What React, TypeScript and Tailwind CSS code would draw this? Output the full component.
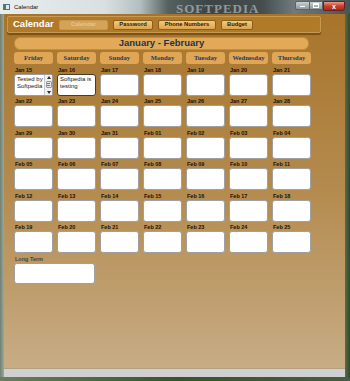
import React from "react";

const days = ["Friday", "Saturday", "Sunday", "Monday", "Tuesday", "Wednesday", "Thursday"];

const weeks: string[][] = [
  ["Jan 15", "Jan 16", "Jan 17", "Jan 18", "Jan 19", "Jan 20", "Jan 21"],
  ["Jan 22", "Jan 23", "Jan 24", "Jan 25", "Jan 26", "Jan 27", "Jan 28"],
  ["Jan 29", "Jan 30", "Jan 31", "Feb 01", "Feb 02", "Feb 03", "Feb 04"],
  ["Feb 05", "Feb 06", "Feb 07", "Feb 08", "Feb 09", "Feb 10", "Feb 11"],
  ["Feb 12", "Feb 13", "Feb 14", "Feb 15", "Feb 16", "Feb 17", "Feb 18"],
  ["Feb 19", "Feb 20", "Feb 21", "Feb 22", "Feb 23", "Feb 24", "Feb 25"],
];

const sans = { fontFamily: '"Liberation Sans", Arial, sans-serif' };
const serif = { fontFamily: '"Liberation Serif", "Times New Roman", serif' };

function Cell({ wi, di }: { wi: number; di: number }) {
  if (wi === 0 && di === 0) {
    return (
      <div className="relative h-[22px] rounded-[3px] border border-[#9c9c9c] bg-white flex">
        <div className="flex-1 pl-[2px] pt-[1px] text-[6px] leading-[7px] text-[#202020]" style={sans}>
          Tested by
          <br />
          Softpedia
        </div>
        <div className="w-[8px] h-full border-l border-[#c8c8c8] bg-[#f0f0f0] flex flex-col items-center justify-between py-[1px]">
          <div className="w-0 h-0 border-l-[2px] border-r-[2px] border-b-[3px] border-l-transparent border-r-transparent border-b-[#303030]" />
          <div className="w-[6px] h-[7px] rounded-[1px] border border-[#9a9a9a] bg-[#e4e4e4] flex flex-col items-center justify-center gap-[1px]">
            <div className="w-[3px] h-px bg-[#808080]" />
            <div className="w-[3px] h-px bg-[#808080]" />
          </div>
          <div className="w-0 h-0 border-l-[2px] border-r-[2px] border-t-[3px] border-l-transparent border-r-transparent border-t-[#303030]" />
        </div>
      </div>
    );
  }
  if (wi === 0 && di === 1) {
    return (
      <div className="h-[22px] rounded-[3px] border-[1.5px] border-[#4a3c28] bg-white pl-[2px] pt-[1px] text-[6px] leading-[7px] text-[#202020]" style={sans}>
        Softpedia is
        <br />
        testing
      </div>
    );
  }
  return <div className="h-[22px] rounded-[3px] border border-[#a0a0a0] bg-white" />;
}

export default function App() {
  return (
    <div className="w-[350px] h-[381px] relative overflow-hidden bg-[#55685a] flex flex-col" style={sans}>
      {/* title bar */}
      <div
        className="relative h-[14px] shrink-0 flex items-center"
        style={{
          background:
            "linear-gradient(to right, #e9eef0 0%, #d8e0e2 30%, #b4bec0 40%, #56605f 48%, #3c4446 60%, #454d4f 75%, #707a7c 84%, #4a5456 100%)",
        }}
      >
        <div className="ml-[3px] w-[7px] h-[6px] border border-[#607080] bg-[linear-gradient(to_right,#3a8a4a_50%,#dfe8f0_50%)]" />
        <span className="ml-[4px] text-[6px] text-[#101010]" style={sans}>
          Calendar
        </span>
        <span
          className="absolute left-[176px] top-[-1px] text-[13px] font-bold tracking-[1px] text-[#c8cccc] opacity-60"
          style={serif}
        >
          SOFTPEDIA
        </span>
        <div className="absolute right-[5px] top-[1px] flex h-[11px]">
          <div className="w-[15px] h-[9px] rounded-l-[2px] border border-[#5a6466] bg-[linear-gradient(#c8d0d2,#8e9a9c)] flex items-end justify-center pb-[2px]">
            <div className="w-[5px] h-[1.5px] bg-white" />
          </div>
          <div className="w-[13px] h-[9px] border border-l-0 border-[#5a6466] bg-[linear-gradient(#c8d0d2,#8e9a9c)] flex items-center justify-center">
            <div className="w-[6px] h-[5px] border border-white border-t-2" />
          </div>
          <div className="w-[22px] h-[10px] rounded-br-[3px] rounded-tr-[1px] border border-[#6a2018] bg-[linear-gradient(#e89a8a,#c8402e_50%,#b02818)] flex items-center justify-center text-[7px] font-bold leading-none text-white">
            x
          </div>
        </div>
      </div>

      {/* body */}
      <div className="flex flex-1 min-h-0">
        <div className="w-[4px] bg-[linear-gradient(to_right,#6f8070,#9aa8a2)]" />
        <div className="flex-1 flex flex-col bg-[linear-gradient(#a8742a,#b48c50_50%,#c8ae88)]">
          {/* toolbar */}
          <div className="relative mt-[2px] ml-[3px] w-[314px] h-[17px] rounded-[2px] border border-[#c79a52] bg-[#b07a28] shadow-[0_2px_1px_#7a5018] flex items-center">
            <span className="ml-[5px] w-[42px] text-[9.5px] font-bold text-white" style={sans}>
              Calendar
            </span>
            <div className="ml-[4px] w-[49px] h-[10px] rounded-[2px] border border-[#c89850] bg-[#d4a35a] flex items-center justify-center text-[5.8px] font-bold text-[#e6c68e]">
              Calendar
            </div>
            {[
              ["Password", "w-[40px]"],
              ["Phone Numbers", "w-[58px]"],
              ["Budget", "w-[32px]"],
            ].map(([t, w]) => (
              <div
                key={t}
                className={`ml-[5px] ${w} h-[10px] rounded-[2px] border border-[#8a5e1c] bg-[linear-gradient(#f4c878,#dca450)] flex items-center justify-center text-[5.8px] font-bold text-[#2a1a08]`}
              >
                {t}
              </div>
            ))}
          </div>

          {/* month bar */}
          <div className="mt-[4px] ml-[10px] w-[295px] h-[13px] rounded-[6px] border border-[#c28d3c] bg-[#e2a956] flex items-center justify-center text-[9.5px] font-bold text-[#1c3452]">
            January - February
          </div>

          {/* grid */}
          <div className="ml-[10px] mt-[2px] w-[297px]">
            <div className="grid grid-cols-[repeat(7,39px)] gap-x-[4px]">
              {days.map((d) => (
                <div
                  key={d}
                  className="h-[12px] rounded-[3px] bg-[#e0a655] flex items-center justify-center text-[6.6px] font-bold text-[#1e3a5a]"
                  style={serif}
                >
                  {d}
                </div>
              ))}
            </div>
            {weeks.map((w, wi) => (
              <div key={wi} className="grid grid-cols-[repeat(7,39px)] gap-x-[4px]">
                {w.map((lab, di) => (
                  <div key={lab} className="flex flex-col">
                    <div className="h-[9.5px] flex items-end pl-[1px] pb-[0.5px] text-[5.5px] font-bold leading-none text-[#1a1208]">
                      {lab}
                    </div>
                    <Cell wi={wi} di={di} />
                  </div>
                ))}
              </div>
            ))}
            <div className="h-[10px] flex items-end pl-[1px] pb-[1px] text-[5.5px] font-bold leading-none text-[#3a4a40]">
              Long Term
            </div>
            <div className="w-[81px] h-[21px] rounded-[3px] border border-[#a0a0a0] bg-white" />
          </div>
          <div className="flex-1" />
          <div className="h-[9px] border-t border-[#b0a080] bg-[#d0d0d0]" />
        </div>
        <div className="w-[5px] bg-[linear-gradient(to_right,#5a6a4a,#2e4a28)]" />
      </div>
      <div className="h-[4px] bg-[linear-gradient(to_right,#6a7e60,#3a5234,#4a5a48)]" />
    </div>
  );
}
